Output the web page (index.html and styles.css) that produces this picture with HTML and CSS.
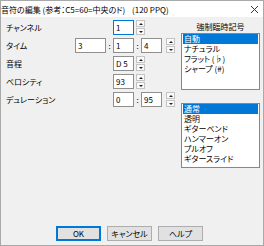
FILE: index.html
```html
<!DOCTYPE html>
<html lang="ja">
<head>
  <meta charset="UTF-8">
  <title>音符の編集</title>
  <link rel="stylesheet" href="styles.css">
</head>
<body>
  <div class="window">
    <div class="titlebar">
      <span class="title">音符の編集 (参考：C5=60=中央のド)</span>
      <span class="ppq">(120 PPQ)</span>
      <svg class="close" width="9" height="9" viewBox="0 0 9 9">
        <path d="M1 1 L8 8 M8 1 L1 8" stroke="#333" stroke-width="1" fill="none"/>
      </svg>
    </div>

    <div class="content">
      <div class="form">
        <label class="lbl">チャンネル</label>
        <input class="field focus c4" type="text" value="1">
        <div class="spin c5"><span class="up"></span><span class="down"></span></div>

        <label class="lbl">タイム</label>
        <input class="field c2" type="text" value="3">
        <span class="colon c3">:</span>
        <input class="field c4" type="text" value="1">
        <span class="colon c5">:</span>
        <input class="field c6" type="text" value="4">
        <div class="spin c7"><span class="up"></span><span class="down"></span></div>

        <label class="lbl">音程</label>
        <input class="field c4" type="text" value="D 5">
        <div class="spin c5"><span class="up"></span><span class="down"></span></div>

        <label class="lbl">ベロシティ</label>
        <input class="field c4" type="text" value="93">
        <div class="spin c5"><span class="up"></span><span class="down"></span></div>

        <label class="lbl">デュレーション</label>
        <input class="field c4" type="text" value="0">
        <span class="colon c5">:</span>
        <input class="field c6" type="text" value="95">
        <div class="spin c7"><span class="up"></span><span class="down"></span></div>
      </div>

      <div class="side">
        <div class="side-label">強制臨時記号</div>
        <ul class="listbox list-acc">
          <li class="selected">自動</li>
          <li>ナチュラル</li>
          <li>フラット (♭)</li>
          <li>シャープ (#)</li>
        </ul>
        <ul class="listbox list-tech">
          <li class="selected">通常</li>
          <li>透明</li>
          <li>ギターベンド</li>
          <li>ハンマーオン</li>
          <li>プルオフ</li>
          <li>ギタースライド</li>
        </ul>
      </div>
    </div>

    <div class="buttons">
      <button class="btn default" type="button">OK</button>
      <button class="btn" type="button">キャンセル</button>
      <button class="btn" type="button">ヘルプ</button>
    </div>
  </div>
</body>
</html>
```

FILE: styles.css
```css
body {
  margin: 0;
  font-family: "Noto Sans CJK JP", "Noto Sans", sans-serif;
  font-size: 8px;
  font-feature-settings: "palt";
  color: #000;
}
.window {
  width: 264px;
  height: 246px;
  box-sizing: border-box;
  border: 1px solid #a9a9a9;
  background: #f0f0f0;
  display: flex;
  flex-direction: column;
}
.titlebar {
  height: 16px;
  background: #fff;
  display: flex;
  align-items: center;
  white-space: nowrap;
}
.title {
  width: 131px;
}
.close {
  margin-left: auto;
  margin-right: 4px;
}
.content {
  display: flex;
  padding: 3px 3px 0 5px;
}
.form {
  display: grid;
  grid-template-columns: 69px 31px 7px 21px 7px 21px 13px;
  grid-template-rows: repeat(5, 15px);
  row-gap: 3px;
  align-items: center;
}
.lbl {
  grid-column: 1;
}
.c2 { grid-column: 2; }
.c3 { grid-column: 3; }
.c4 { grid-column: 4; }
.c5 { grid-column: 5; }
.c6 { grid-column: 6; }
.c7 { grid-column: 7; }
.field {
  width: 100%;
  height: 15px;
  box-sizing: border-box;
  margin: 0;
  padding: 0 2px;
  border: 1px solid #8f8f8f;
  background: #fff;
  font: inherit;
  outline: none;
}
.field.focus {
  border-color: #0078d7;
}
.colon {
  text-align: center;
}
.spin {
  width: 9px;
  height: 15px;
  display: flex;
  flex-direction: column;
  gap: 1px;
  margin-left: 2px;
}
.spin.c7 {
  margin-left: 4px;
}
.spin span {
  flex: 1;
  border: 1px solid #c4c4c4;
  background: #fafafa;
  display: flex;
  align-items: center;
  justify-content: center;
}
.spin .up::before {
  content: "";
  border-left: 2px solid transparent;
  border-right: 2px solid transparent;
  border-bottom: 2px solid #222;
}
.spin .down::before {
  content: "";
  border-left: 2px solid transparent;
  border-right: 2px solid transparent;
  border-top: 2px solid #222;
}
.side {
  margin-left: 6px;
  width: 79px;
}
.side-label {
  line-height: 13px;
  text-align: center;
}
.listbox {
  list-style: none;
  margin: 0;
  padding: 0 1px;
  border: 1px solid #828790;
  background: #fff;
  box-sizing: border-box;
}
.listbox li {
  line-height: 10px;
  padding-left: 1px;
  white-space: nowrap;
}
.listbox li.selected {
  background: #0078d7;
  color: #fff;
}
.list-acc {
  height: 57px;
}
.list-tech {
  margin-top: 13px;
  height: 65px;
}
.buttons {
  margin-top: auto;
  padding: 0 5px 4px 0;
  display: flex;
  justify-content: center;
  gap: 6px;
}
.btn {
  width: 45px;
  height: 15px;
  padding: 0;
  border: 1px solid #adadad;
  background: #e1e1e1;
  font: inherit;
  color: #000;
}
.btn.default {
  border-color: #0078d7;
  box-shadow: inset 0 0 0 1px #0078d7;
}
```
